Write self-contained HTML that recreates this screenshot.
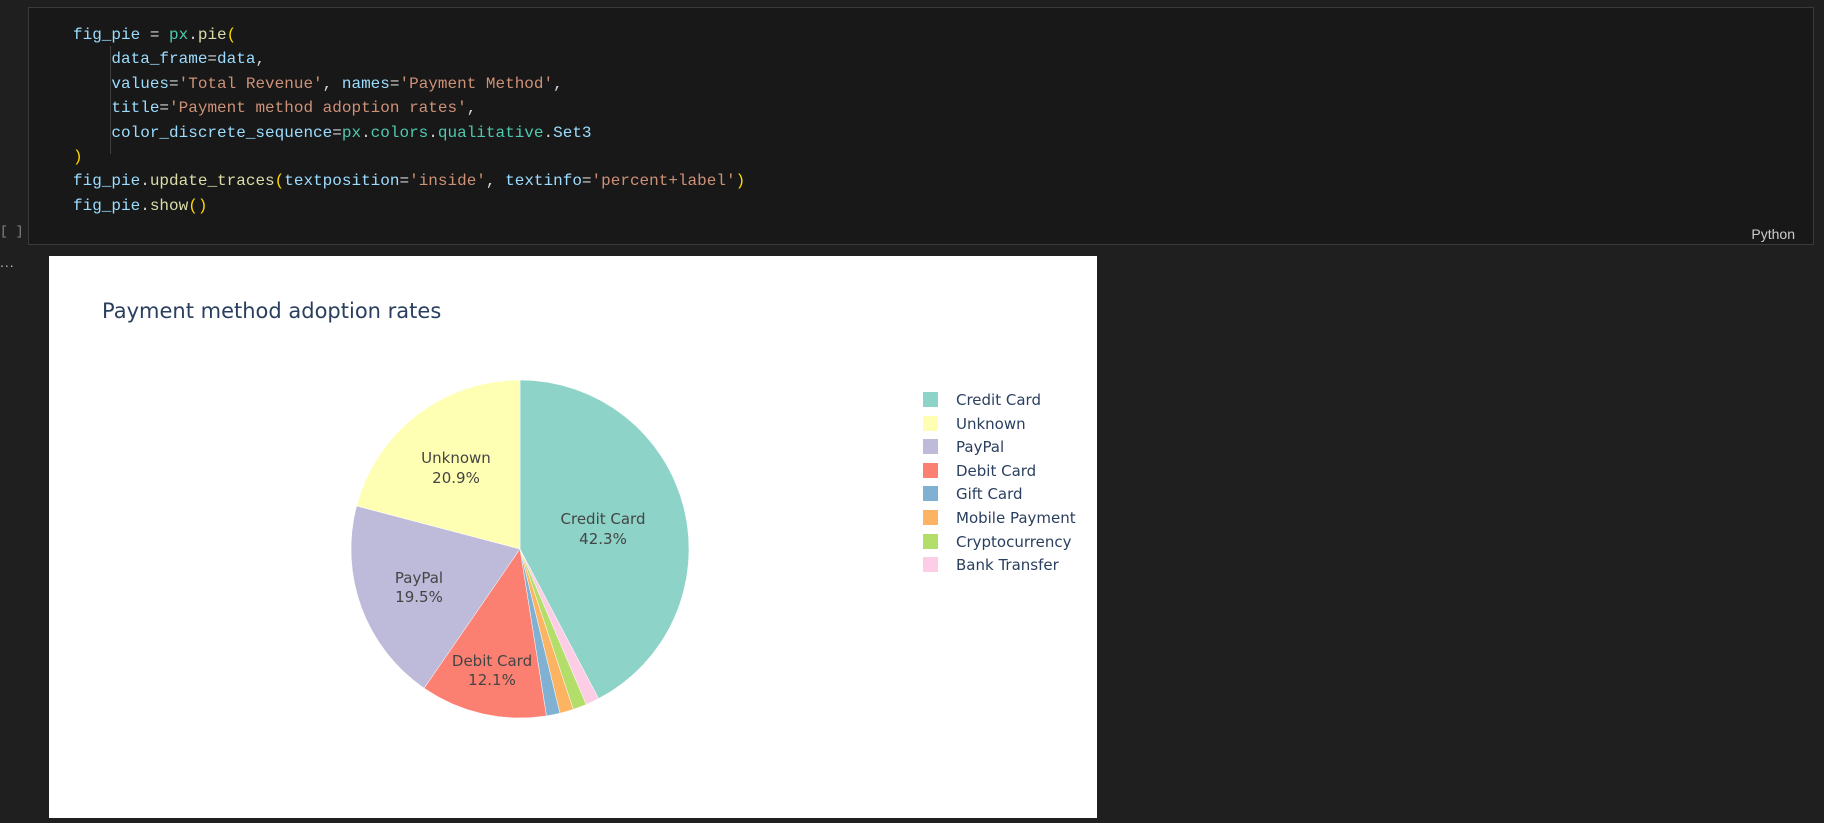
<!DOCTYPE html>
<html><head><meta charset="utf-8">
<style>
html,body{margin:0;padding:0;background:#1f1f1f;width:1824px;height:818px;overflow:hidden;}
.cell{position:absolute;left:28px;top:7px;width:1784px;height:236px;background:#181818;border:1px solid #3a3a3a;}
pre{position:absolute;left:44px;top:15px;margin:0;font-family:"Liberation Mono",monospace;font-size:16px;line-height:24.4px;color:#d4d4d4;}
.v{color:#9cdcfe}.m{color:#4ec9b0}.s{color:#ce9178}.p{color:#ffd700}.f{color:#dcdcaa}
.guide{position:absolute;left:81px;top:38px;width:1px;height:108px;background:#404040;}
.py{position:absolute;right:18px;top:218px;font-family:"Liberation Sans",sans-serif;font-size:14px;color:#cccccc;}
.br{position:absolute;left:0;top:224px;font-family:"Liberation Mono",monospace;font-size:13px;color:#888;}
.dots{position:absolute;left:0;top:254px;font-family:"Liberation Sans",sans-serif;font-size:14px;color:#bbb;letter-spacing:1px}
.out{position:absolute;left:49px;top:256px;width:1048px;height:562px;background:#fff;}
svg text{font-family:"DejaVu Sans","Liberation Sans",sans-serif;}
</style></head><body>
<div class="cell">
<div class="guide"></div>
<pre><span class="v">fig_pie</span> = <span class="m">px</span>.<span class="f">pie</span><span class="p">(</span>
    <span class="v">data_frame</span>=<span class="v">data</span>,
    <span class="v">values</span>=<span class="s">'Total Revenue'</span>, <span class="v">names</span>=<span class="s">'Payment Method'</span>,
    <span class="v">title</span>=<span class="s">'Payment method adoption rates'</span>,
    <span class="v">color_discrete_sequence</span>=<span class="m">px</span>.<span class="m">colors</span>.<span class="m">qualitative</span>.<span class="v">Set3</span>
<span class="p">)</span>
<span class="v">fig_pie</span>.<span class="f">update_traces</span><span class="p">(</span><span class="v">textposition</span>=<span class="s">'inside'</span>, <span class="v">textinfo</span>=<span class="s">'percent+label'</span><span class="p">)</span>
<span class="v">fig_pie</span>.<span class="f">show</span><span class="p">()</span></pre>
<div class="py">Python</div>
</div>
<div class="br">[ ]</div>
<div class="dots">...</div>
<div class="out">
<svg width="1048" height="562" viewBox="0 0 1048 562" id="svg">
<text x="53" y="62" font-size="21" fill="#2a3f5f">Payment method adoption rates</text>
<g id="pie"></g>
<g font-size="15" fill="#444" text-anchor="middle">
<text x="554" y="268">Credit Card</text><text x="554" y="288">42.3%</text>
<text x="407" y="207">Unknown</text><text x="407" y="227">20.9%</text>
<text x="370" y="327">PayPal</text><text x="370" y="346">19.5%</text>
<text x="443" y="410">Debit Card</text><text x="443" y="429">12.1%</text>
</g>
<g font-size="15" fill="#2a3f5f">
<rect x="874" y="136" width="15" height="15" fill="#8DD3C7"/><text x="907" y="149">Credit Card</text>
<rect x="874" y="160" width="15" height="15" fill="#FFFFB3"/><text x="907" y="173">Unknown</text>
<rect x="874" y="183" width="15" height="15" fill="#BEBADA"/><text x="907" y="196">PayPal</text>
<rect x="874" y="207" width="15" height="15" fill="#FB8072"/><text x="907" y="220">Debit Card</text>
<rect x="874" y="230" width="15" height="15" fill="#80B1D3"/><text x="907" y="243">Gift Card</text>
<rect x="874" y="254" width="15" height="15" fill="#FDB462"/><text x="907" y="267">Mobile Payment</text>
<rect x="874" y="278" width="15" height="15" fill="#B3DE69"/><text x="907" y="291">Cryptocurrency</text>
<rect x="874" y="301" width="15" height="15" fill="#FCCDE5"/><text x="907" y="314">Bank Transfer</text>
</g>
</svg>
</div>
<script>
(function(){
var cx=471,cy=293,r=169;
var d=[[42.3,"#8DD3C7"],[1.3,"#FCCDE5"],[1.3,"#B3DE69"],[1.3,"#FDB462"],[1.3,"#80B1D3"],[12.1,"#FB8072"],[19.5,"#BEBADA"],[20.9,"#FFFFB3"]];
var tot=0;d.forEach(function(x){tot+=x[0];});
var a=0,g=document.getElementById("pie"),h="";
d.forEach(function(x){
 var a2=a+x[0]/tot*2*Math.PI;
 var x1=cx+r*Math.sin(a),y1=cy-r*Math.cos(a),x2=cx+r*Math.sin(a2),y2=cy-r*Math.cos(a2);
 var lg=(a2-a)>Math.PI?1:0;
 h+='<path d="M'+cx+','+cy+' L'+x1.toFixed(2)+','+y1.toFixed(2)+' A'+r+','+r+' 0 '+lg+' 1 '+x2.toFixed(2)+','+y2.toFixed(2)+' Z" fill="'+x[1]+'" stroke="#fff" stroke-width="0.5"/>';
 a=a2;
});
g.innerHTML=h;
})();
</script>
</body></html>
